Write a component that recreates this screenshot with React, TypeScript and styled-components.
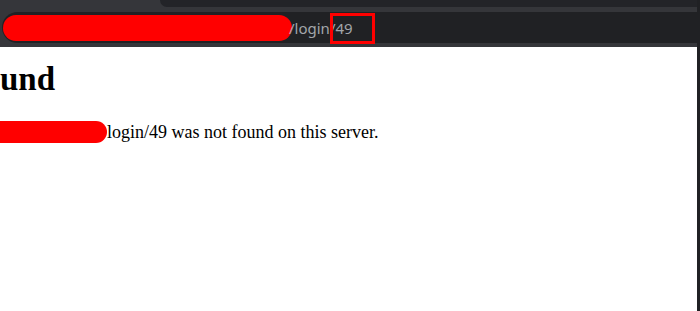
import React from "react";
import styled, { createGlobalStyle } from "styled-components";

const Global = createGlobalStyle`
  html, body { margin: 0; padding: 0; background: #ffffff; }
  body { width: 700px; height: 311px; overflow: hidden; }
  #root { width: 700px; height: 311px; }
`;

const Frame = styled.div`
  display: flex;
  width: 700px;
  height: 311px;
  overflow: hidden;
`;

const Main = styled.div`
  flex: 1;
  display: flex;
  flex-direction: column;
  min-width: 0;
`;

const EdgeLine = styled.div`
  width: 3px;
  background: #202124;
`;

const Chrome = styled.div`
  background: #35363a;
  display: flex;
  flex-direction: column;
  height: 47px;
`;

const TabRow = styled.div`
  display: flex;
  height: 7px;
`;

const TabGap = styled.div`
  width: 160px;
`;

const TabShape = styled.div`
  flex: 1;
  background: #232428;
  border-bottom-left-radius: 7px;
`;

const Toolbar = styled.div`
  display: flex;
  padding: 5px 0 4px 2px;
  height: 40px;
  box-sizing: border-box;
`;

const Omnibox = styled.div`
  position: relative;
  flex: 1;
  display: flex;
  align-items: center;
  background: #202124;
  border-radius: 16px 0 0 16px;
  padding-left: 1px;
`;

const Scribble = styled.div<{ $w: number; $h: number; $left?: boolean }>`
  flex: none;
  width: ${(p) => p.$w}px;
  height: ${(p) => p.$h}px;
  background: #ff0000;
  border-radius: ${(p) =>
    p.$left ? `${p.$h / 2}px` : `0 ${p.$h / 2}px ${p.$h / 2}px 0`};
`;

const UrlText = styled.span`
  font-family: "Noto Sans", "Open Sans", sans-serif;
  font-size: 15px;
  color: #a2a6ab;
  margin-left: -3px;
  line-height: 20px;
  white-space: nowrap;
`;

const Highlight = styled.div`
  position: absolute;
  left: 328px;
  top: 1px;
  width: 45px;
  height: 31px;
  box-sizing: border-box;
  border: 3px solid #ff0000;
`;

const Page = styled.div`
  flex: 1;
  background: #ffffff;
  padding-top: 13px;
  font-family: "Liberation Serif", "Times New Roman", serif;
  color: #000000;
`;

const Heading = styled.h1`
  margin: 0;
  font-size: 33px;
  line-height: 38px;
  font-weight: bold;
  white-space: nowrap;
`;

const Message = styled.p`
  margin: 23px 0 0 0;
  display: flex;
  align-items: center;
  font-size: 18px;
  line-height: 21px;
  white-space: nowrap;
`;

const MessageText = styled.span`
  padding-top: 1px;
`;

export default function App() {
  return (
    <>
      <Global />
      <Frame>
        <Main>
          <Chrome>
            <TabRow>
              <TabGap />
              <TabShape />
            </TabRow>
            <Toolbar>
              <Omnibox>
                <Scribble $w={289} $h={26} $left />
                <UrlText>/login/49</UrlText>
                <Highlight />
              </Omnibox>
            </Toolbar>
          </Chrome>
          <Page>
            <Heading>und</Heading>
            <Message>
              <Scribble $w={107} $h={22} />
              <MessageText>login/49 was not found on this server.</MessageText>
            </Message>
          </Page>
        </Main>
        <EdgeLine />
      </Frame>
    </>
  );
}
